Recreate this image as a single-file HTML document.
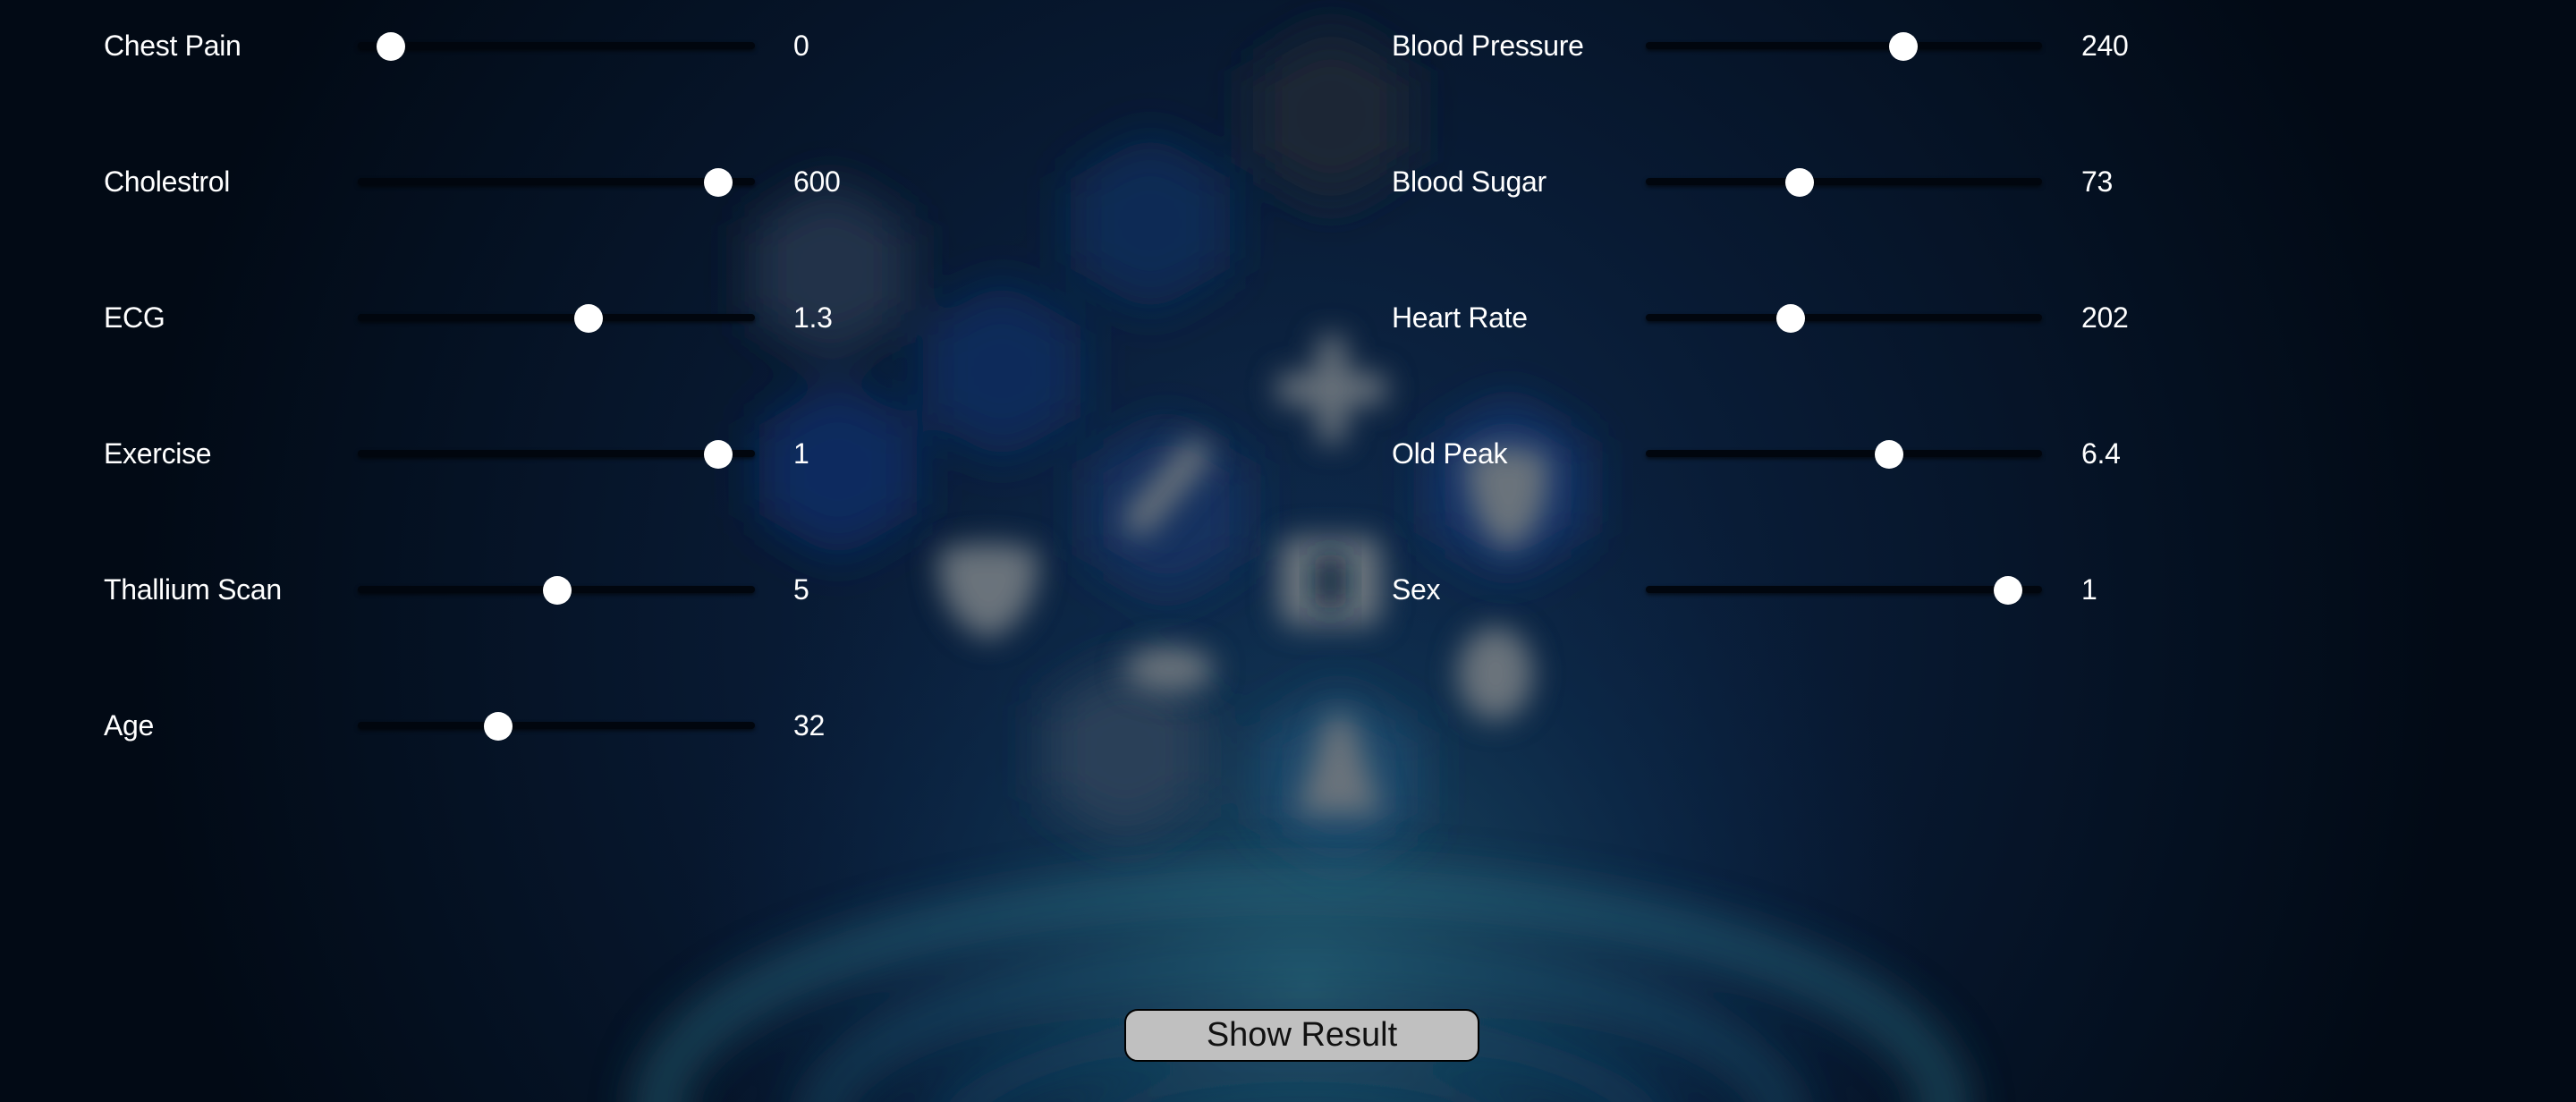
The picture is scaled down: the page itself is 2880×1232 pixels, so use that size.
<!DOCTYPE html>
<html><head><meta charset="utf-8"><style>
html,body{margin:0;padding:0;width:2880px;height:1232px;overflow:hidden;background:#020c19;position:relative;}
.bg{position:absolute;left:0;top:0;width:2880px;height:1232px;display:block;}
.lbl,.val{position:absolute;color:#fff;font-family:"Liberation Sans",sans-serif;font-size:32px;line-height:32px;font-weight:normal;letter-spacing:-0.3px;}
.trk{position:absolute;height:8px;border-radius:4px;background:#01060e;box-shadow:0 2px 4px rgba(0,0,0,0.6);}
.th{position:absolute;width:32px;height:32px;border-radius:50%;background:#fff;}
.btn{position:absolute;left:1257px;top:1128px;width:397px;height:59px;box-sizing:border-box;border:2px solid #000;border-radius:15px;background:#c0c0c0;color:#111;font-family:"Liberation Sans",sans-serif;font-size:38px;line-height:55px;text-align:center;}
</style></head><body>
<svg class="bg" width="2880" height="1232" viewBox="0 0 2880 1232">
<defs>
<radialGradient id="g0" cx="1450" cy="700" r="1300" gradientUnits="userSpaceOnUse">
<stop offset="0" stop-color="#0f2a4c"/><stop offset="0.45" stop-color="#081a33"/><stop offset="1" stop-color="#020a15"/></radialGradient>
<radialGradient id="g1" cx="1460" cy="1100" r="700" gradientUnits="userSpaceOnUse">
<stop offset="0" stop-color="#1f5268"/><stop offset="0.6" stop-color="#0d2c4c" stop-opacity="0.6"/><stop offset="1" stop-color="#0a2040" stop-opacity="0"/></radialGradient>
<filter id="b" x="-50%" y="-50%" width="200%" height="200%"><feGaussianBlur stdDeviation="16"/></filter>
<filter id="b2" x="-50%" y="-50%" width="200%" height="200%"><feGaussianBlur stdDeviation="26"/></filter>
<filter id="b3" x="-50%" y="-50%" width="200%" height="200%"><feGaussianBlur stdDeviation="24"/></filter>
</defs>
<rect width="2880" height="1232" fill="url(#g0)"/>
<rect width="2880" height="1232" fill="url(#g1)"/>
<g filter="url(#b2)">
<polygon points="928,203 1015,253 1015,353 928,403 841,353 841,253" fill="#24334a"/>
<polygon points="1286,150 1375,200 1375,300 1286,350 1197,300 1197,200" fill="#0f2a55"/>
<polygon points="1120,315 1208,365 1208,465 1120,515 1032,465 1032,365" fill="#0f2a5a"/>
<polygon points="937,425 1025,475 1025,575 937,625 849,575 849,475" fill="#0e2b5e"/>
<polygon points="1304,470 1392,520 1392,620 1304,670 1216,620 1216,520" fill="#143260"/>
<polygon points="1686,445 1774,495 1774,595 1686,645 1598,595 1598,495" fill="#14356a"/>
<polygon points="1258,740 1346,790 1346,890 1258,940 1170,890 1170,790" fill="#2a3f58"/>
<polygon points="1497,770 1585,820 1585,920 1497,970 1409,920 1409,820" fill="#1d4a6c"/>
<polygon points="1488,30 1575,80 1575,180 1488,230 1401,180 1401,80" fill="#1a2535"/>
</g>
<g filter="url(#b)" fill="#6b737c">
<rect x="1473" y="375" width="32" height="120" rx="10"/><rect x="1428" y="418" width="122" height="34" rx="10"/>
<rect x="1288" y="480" width="34" height="130" rx="17" transform="rotate(40 1305 545)"/>
<path d="M1050 615 Q1105 600 1160 615 Q1165 690 1105 715 Q1045 690 1050 615Z"/>
<path d="M1640 510 Q1686 490 1730 510 Q1735 590 1686 615 Q1640 590 1640 510Z"/>
<rect x="1430" y="600" width="115" height="100" rx="18"/>
<ellipse cx="1308" cy="748" rx="50" ry="25"/>
<ellipse cx="1672" cy="753" rx="42" ry="52"/>
<path d="M1485 800 L1510 800 L1545 910 L1450 910Z"/>
</g>
<g filter="url(#b)" fill="#0d2640"><rect x="1470" y="620" width="35" height="60" rx="10"/></g>
<g filter="url(#b3)" fill="none">
<ellipse cx="1455" cy="1240" rx="720" ry="245" stroke="#25687c" stroke-width="50" opacity="0.55"/>
<ellipse cx="1455" cy="1255" rx="540" ry="180" stroke="#245f78" stroke-width="40" opacity="0.45"/>
<ellipse cx="1455" cy="1270" rx="390" ry="120" stroke="#1c4a68" stroke-width="35" opacity="0.5"/>
<ellipse cx="1455" cy="1285" rx="240" ry="80" stroke="#164060" stroke-width="30" opacity="0.5"/>
</g>
</svg>

<div class="lbl" style="left:116px;top:35px">Chest Pain</div>
<div class="trk" style="left:400px;top:47px;width:444px"></div><div class="th" style="left:421px;top:36px"></div>
<div class="val" style="left:887px;top:35px">0</div>

<div class="lbl" style="left:116px;top:187px">Cholestrol</div>
<div class="trk" style="left:400px;top:199px;width:444px"></div><div class="th" style="left:787px;top:188px"></div>
<div class="val" style="left:887px;top:187px">600</div>

<div class="lbl" style="left:116px;top:339px">ECG</div>
<div class="trk" style="left:400px;top:351px;width:444px"></div><div class="th" style="left:642px;top:340px"></div>
<div class="val" style="left:887px;top:339px">1.3</div>

<div class="lbl" style="left:116px;top:491px">Exercise</div>
<div class="trk" style="left:400px;top:503px;width:444px"></div><div class="th" style="left:787px;top:492px"></div>
<div class="val" style="left:887px;top:491px">1</div>

<div class="lbl" style="left:116px;top:643px">Thallium Scan</div>
<div class="trk" style="left:400px;top:655px;width:444px"></div><div class="th" style="left:607px;top:644px"></div>
<div class="val" style="left:887px;top:643px">5</div>

<div class="lbl" style="left:116px;top:795px">Age</div>
<div class="trk" style="left:400px;top:807px;width:444px"></div><div class="th" style="left:541px;top:796px"></div>
<div class="val" style="left:887px;top:795px">32</div>

<div class="lbl" style="left:1556px;top:35px">Blood Pressure</div>
<div class="trk" style="left:1840px;top:47px;width:443px"></div><div class="th" style="left:2112px;top:36px"></div>
<div class="val" style="left:2327px;top:35px">240</div>

<div class="lbl" style="left:1556px;top:187px">Blood Sugar</div>
<div class="trk" style="left:1840px;top:199px;width:443px"></div><div class="th" style="left:1996px;top:188px"></div>
<div class="val" style="left:2327px;top:187px">73</div>

<div class="lbl" style="left:1556px;top:339px">Heart Rate</div>
<div class="trk" style="left:1840px;top:351px;width:443px"></div><div class="th" style="left:1986px;top:340px"></div>
<div class="val" style="left:2327px;top:339px">202</div>

<div class="lbl" style="left:1556px;top:491px">Old Peak</div>
<div class="trk" style="left:1840px;top:503px;width:443px"></div><div class="th" style="left:2096px;top:492px"></div>
<div class="val" style="left:2327px;top:491px">6.4</div>

<div class="lbl" style="left:1556px;top:643px">Sex</div>
<div class="trk" style="left:1840px;top:655px;width:443px"></div><div class="th" style="left:2229px;top:644px"></div>
<div class="val" style="left:2327px;top:643px">1</div>

<div class="btn">Show Result</div>
</body></html>
